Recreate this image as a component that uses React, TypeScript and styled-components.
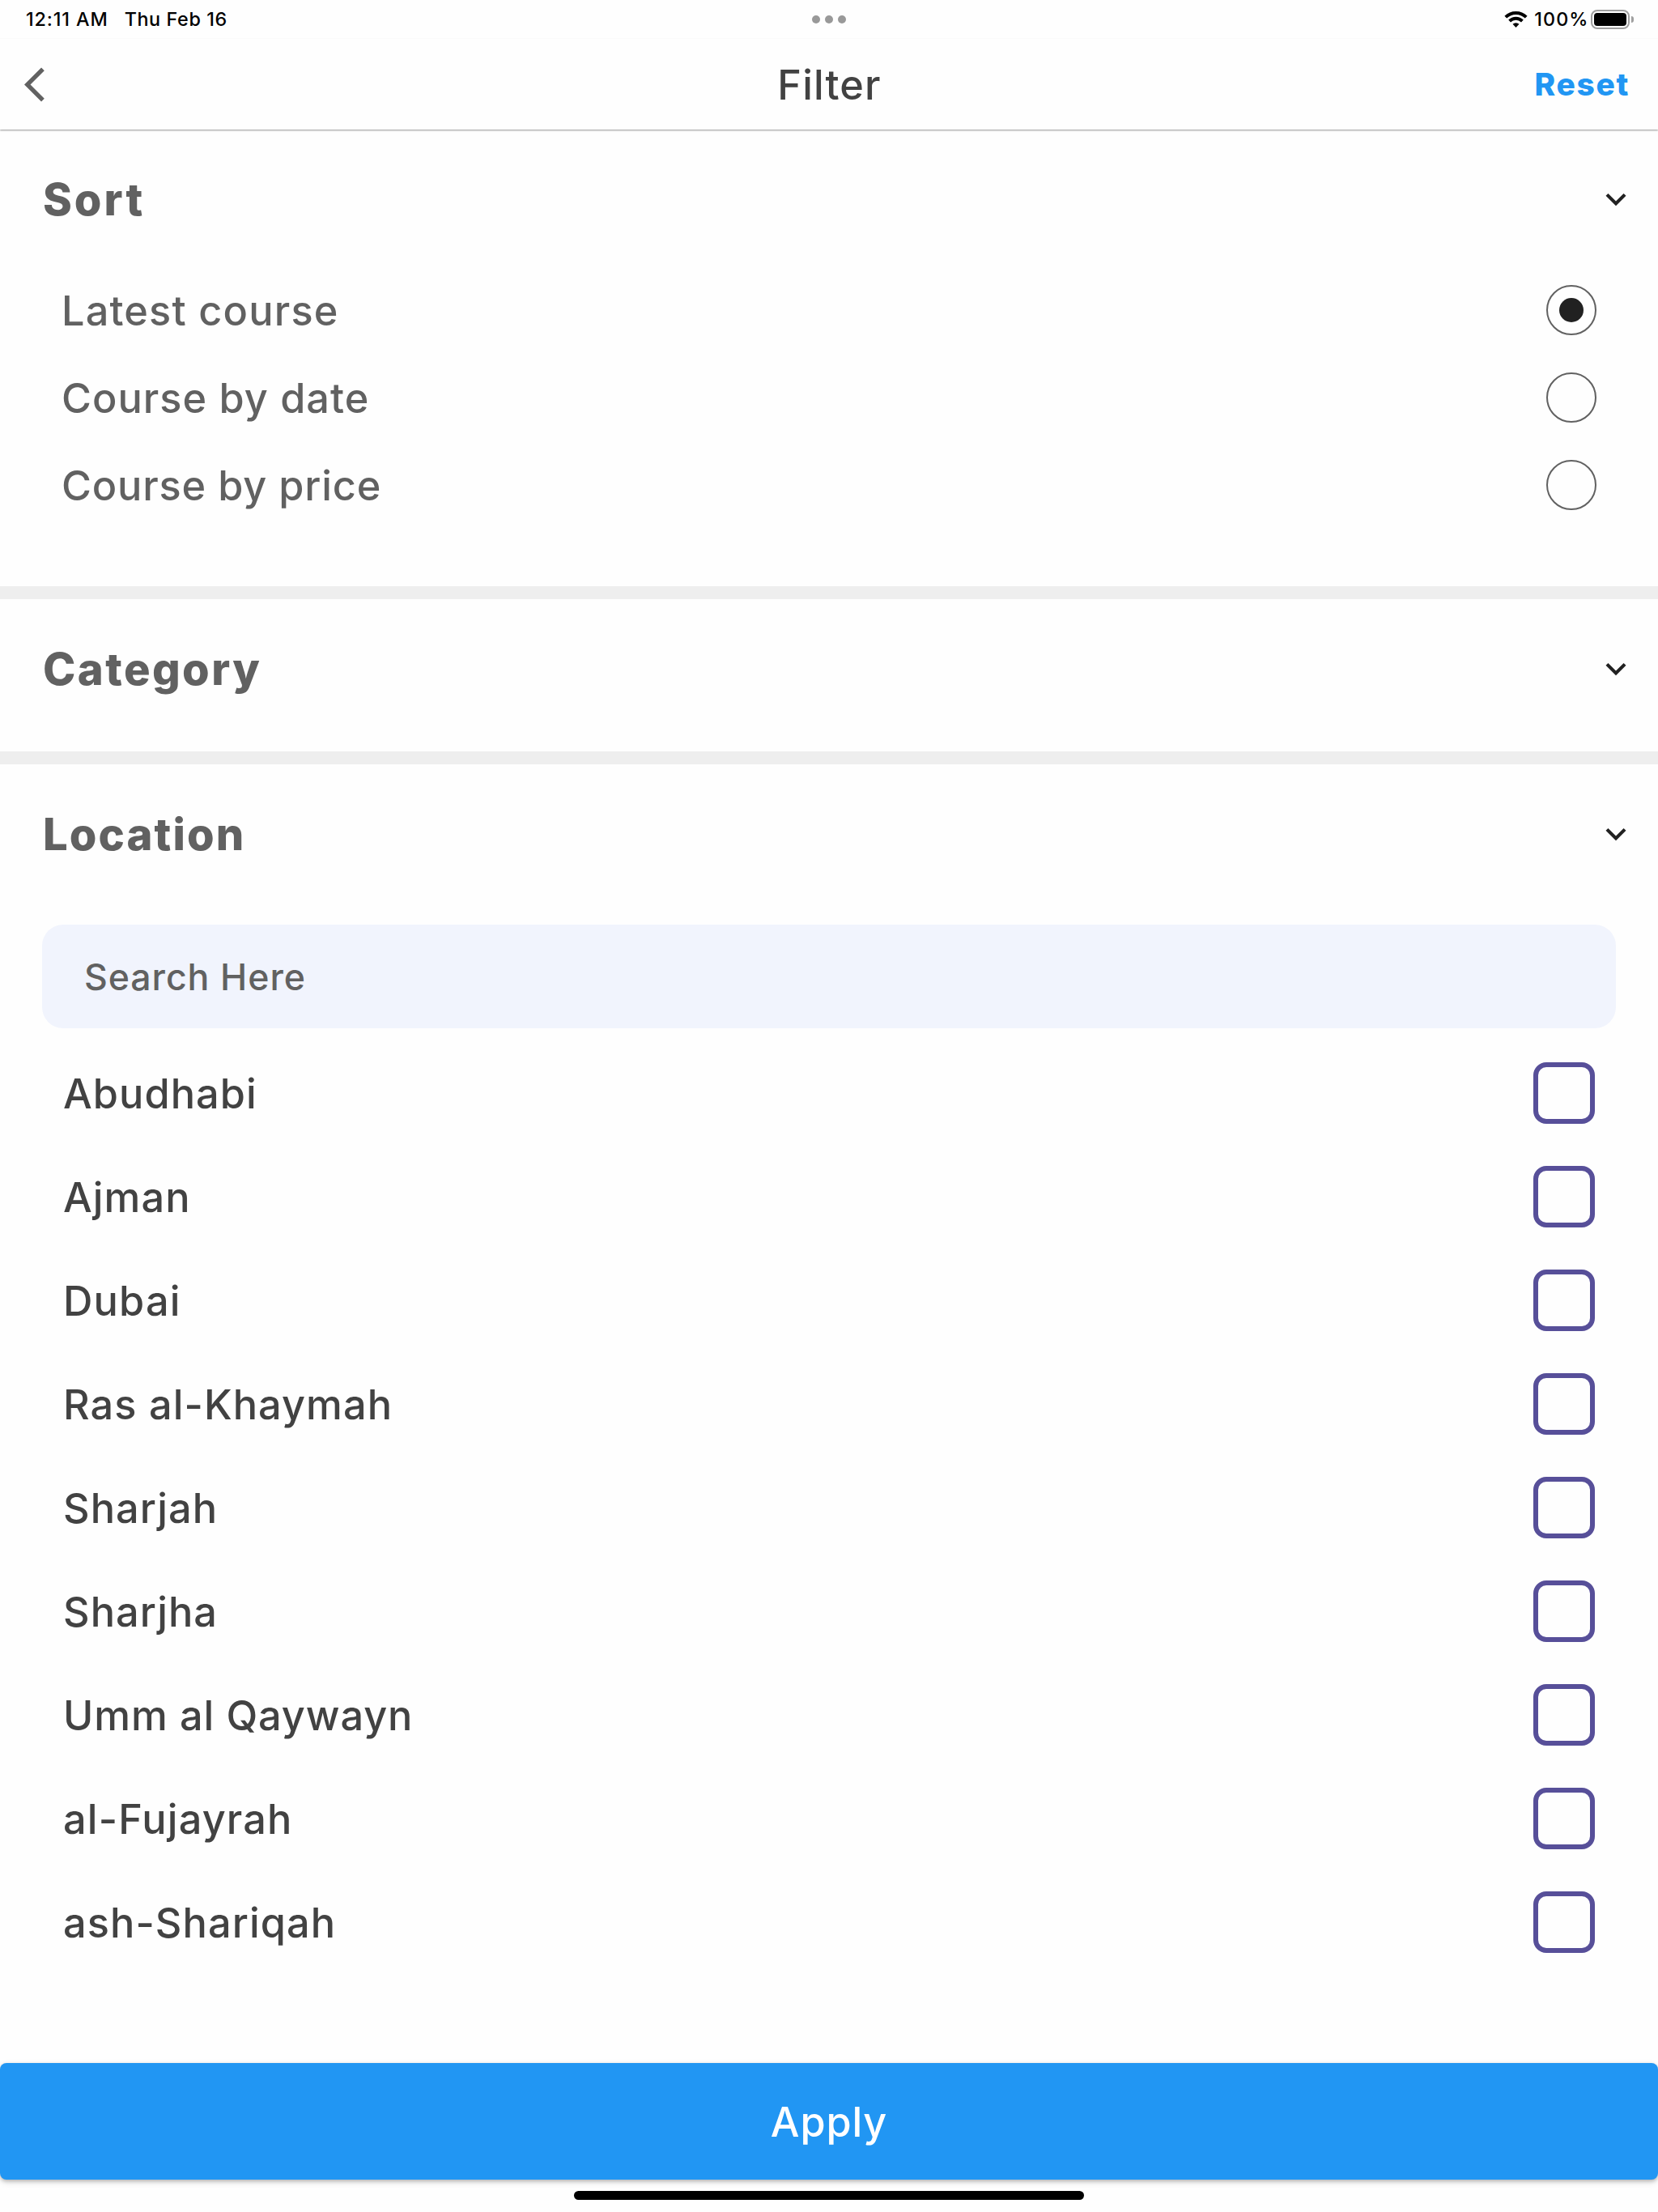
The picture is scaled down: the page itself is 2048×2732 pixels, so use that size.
import React, { useState } from 'react';
import styled, { createGlobalStyle } from 'styled-components';

const GlobalStyle = createGlobalStyle`
  *, *::before, *::after { box-sizing: border-box; }
  body { margin: 0; background: #fefefe; }
  button { border: 0; background: none; padding: 0; margin: 0; font: inherit; color: inherit; }
  svg { display: block; flex: none; }
`;

const Screen = styled.div`
  display: flex;
  flex-direction: column;
  width: 2048px;
  height: 2732px;
  overflow: hidden;
  background: #fefefe;
  font-family: Inter, 'Liberation Sans', sans-serif;
  font-weight: 500;
  font-kerning: normal;
`;

const StatusBar = styled.div`
  display: grid;
  grid-template-columns: 1fr auto 1fr;
  flex: none;
  height: 48px;
  padding: 0 30px 0 32px;
  border-bottom: 1px solid #fafafa;
  color: #000;
  font-size: 23.3px;
  line-height: 29px;
`;

const StatusGroup = styled.div<{ $end?: boolean }>`
  display: flex;
  justify-content: ${(p) => (p.$end ? 'flex-end' : 'flex-start')};
`;

const StatusText = styled.span<{ $spacing: number; $gap: number }>`
  padding-top: 9px;
  margin-right: ${(p) => p.$gap}px;
  letter-spacing: ${(p) => p.$spacing}px;
  white-space: nowrap;
`;

const Dots = styled.div`
  display: flex;
  gap: 6px;
  padding: 19px 2px 0 0;
`;

const Dot = styled.i`
  width: 10px;
  height: 10px;
  border-radius: 50%;
  background: #999;
`;

const WifiSvg = styled.svg`
  margin: 13px 8px 0 0;
`;

const Battery = styled.div`
  display: flex;
  align-items: center;
  gap: 2px;
  height: 24px;
  margin-top: 12px;
`;

const BatteryShell = styled.div`
  width: 48px;
  height: 24px;
  padding: 2px;
  border: 2px solid #9f9f9f;
  border-radius: 8px;
`;

const BatteryLevel = styled.div`
  height: 100%;
  border-radius: 4px;
  background: #000;
`;

const BatteryTip = styled.div`
  width: 3px;
  height: 8px;
  border-radius: 0 4px 4px 0;
  background: #9f9f9f;
`;

const AppBar = styled.header`
  display: grid;
  grid-template-columns: 1fr auto 1fr;
  align-items: center;
  flex: none;
  height: 112px;
  padding: 0 35px 0 30px;
  box-shadow: 0 1px 2px rgba(0, 0, 0, 0.42);
  clip-path: inset(0 0 -8px 0);
`;

const Label = styled.span<{ $spacing: number; $color: string }>`
  padding-top: 1px;
  color: ${(p) => p.$color};
  font-size: 50.4px;
  line-height: 61px;
  letter-spacing: ${(p) => p.$spacing}px;
  white-space: nowrap;
`;

const PageTitle = styled(Label)`
  padding-left: 6px;
`;

const ResetButton = styled.button`
  justify-self: end;
  padding-bottom: 1px;
  color: #2196f3;
  font-size: 38.8px;
  font-weight: 800;
  line-height: 47px;
  letter-spacing: 1.72px;
`;

const Section = styled.section<{ $bottom: number; $divided?: boolean }>`
  flex: none;
  padding: 53px 0 ${(p) => p.$bottom}px;
  border-bottom: ${(p) => (p.$divided ? 16 : 0)}px solid #eee;
`;

const SectionHeader = styled.div`
  display: flex;
  align-items: center;
  justify-content: space-between;
  height: 66px;
  padding: 0 27px 0 53px;
`;

const SectionTitle = styled.h2<{ $spacing: number }>`
  margin: 0;
  color: #616161;
  font-size: 54.3px;
  font-weight: 800;
  line-height: 66px;
  letter-spacing: ${(p) => p.$spacing}px;
`;

const SortList = styled.div`
  display: flex;
  flex-direction: column;
  margin-top: 50px;
`;

const SortRow = styled.div`
  display: flex;
  align-items: center;
  justify-content: space-between;
  height: 108px;
  padding: 0 76px;
`;

const Radio = styled.button`
  display: grid;
  place-items: center;
  width: 62px;
  height: 62px;
  border: 2px solid #616161;
  border-radius: 50%;
`;

const RadioMark = styled.i`
  width: 30px;
  height: 30px;
  border-radius: 50%;
  background: #212121;
`;

const SearchBox = styled.div`
  display: flex;
  align-items: center;
  height: 128px;
  margin: 79px 52px 16px;
  padding: 2px 52px 0;
  border-radius: 26px;
  background: #f1f4fd;
  color: #616161;
  font-size: 44.6px;
  line-height: 54px;
  letter-spacing: 0.93px;
`;

const PlaceRow = styled.div`
  display: flex;
  align-items: center;
  justify-content: space-between;
  height: 128px;
  padding: 0 78px;
`;

const Checkbox = styled.button`
  width: 76px;
  height: 76px;
  border: 6px solid #574f99;
  border-radius: 16px;
`;

const Footer = styled.footer`
  display: flex;
  flex-direction: column;
  align-items: center;
  margin-top: auto;
  padding-bottom: 15px;
`;

const ApplyButton = styled.button`
  display: flex;
  align-items: center;
  justify-content: center;
  width: 100%;
  height: 144px;
  border-radius: 8px;
  background: #2196f3;
  box-shadow: 0 2px 4px rgba(0, 0, 0, 0.2), 0 3px 8px rgba(0, 0, 0, 0.14);
`;

const HomeIndicator = styled.div`
  width: 630px;
  height: 11px;
  margin-top: 14px;
  border-radius: 6px;
  background: #000;
`;

function Chevron() {
  return (
    <svg width="50" height="50" viewBox="0 0 24 24" fill="#212121">
      <path d="M16.59 8.59 12 13.17 7.41 8.59 6 10l6 6 6-6z" />
    </svg>
  );
}

function BackArrow() {
  return (
    <svg width="51" height="51" viewBox="0 0 24 24" fill="#616161">
      <path d="M11.67 3.87 9.9 2.1 0 12l9.9 9.9 1.77-1.77L3.54 12z" />
    </svg>
  );
}

function Wifi() {
  return (
    <WifiSvg width="29" height="22" viewBox="0 0 29 22">
      <g fill="none" stroke="#000" strokeWidth="3.9">
        <path d="M1.8 8.2a18 18 0 0 1 25.4 0" />
        <path d="M6.6 13a11.2 11.2 0 0 1 15.8 0" />
      </g>
      <path d="M14.5 20.9l-4-4.1a5.7 5.7 0 0 1 8 0z" />
    </WifiSvg>
  );
}

const sortOptions = [
  { name: 'Latest course', spacing: 1.18 },
  { name: 'Course by date', spacing: 1.02 },
  { name: 'Course by price', spacing: 0.84 },
];

const places = [
  { name: 'Abudhabi', spacing: 1.08 },
  { name: 'Ajman', spacing: 1.1 },
  { name: 'Dubai', spacing: 1.2 },
  { name: 'Ras al-Khaymah', spacing: 1.1 },
  { name: 'Sharjah', spacing: 1.1 },
  { name: 'Sharjha', spacing: 1.1 },
  { name: 'Umm al Qaywayn', spacing: 0.92 },
  { name: 'al-Fujayrah', spacing: 1.18 },
  { name: 'ash-Shariqah', spacing: 1.12 },
];

export default function App() {
  const [sort, setSort] = useState(sortOptions[0].name);

  return (
    <>
      <GlobalStyle />
      <Screen>
        <StatusBar>
          <StatusGroup>
            <StatusText $spacing={0.9} $gap={20}>12:11 AM</StatusText>
            <StatusText $spacing={0.63} $gap={0}>Thu Feb 16</StatusText>
          </StatusGroup>
          <Dots>
            <Dot />
            <Dot />
            <Dot />
          </Dots>
          <StatusGroup $end>
            <Wifi />
            <StatusText $spacing={1.08} $gap={2.5}>100%</StatusText>
            <Battery>
              <BatteryShell>
                <BatteryLevel />
              </BatteryShell>
              <BatteryTip />
            </Battery>
          </StatusGroup>
        </StatusBar>

        <AppBar>
          <BackArrow />
          <PageTitle $spacing={1.12} $color="#424242">Filter</PageTitle>
          <ResetButton>Reset</ResetButton>
        </AppBar>

        <Section $bottom={71} $divided>
          <SectionHeader>
            <SectionTitle $spacing={3}>Sort</SectionTitle>
            <Chevron />
          </SectionHeader>
          <SortList>
            {sortOptions.map((o) => (
              <SortRow key={o.name}>
                <Label $spacing={o.spacing} $color="#616161">{o.name}</Label>
                <Radio aria-label={o.name} onClick={() => setSort(o.name)}>
                  {sort === o.name && <RadioMark />}
                </Radio>
              </SortRow>
            ))}
          </SortList>
        </Section>

        <Section $bottom={69} $divided>
          <SectionHeader>
            <SectionTitle $spacing={2.45}>Category</SectionTitle>
            <Chevron />
          </SectionHeader>
        </Section>

        <Section $bottom={0}>
          <SectionHeader>
            <SectionTitle $spacing={2.12}>Location</SectionTitle>
            <Chevron />
          </SectionHeader>
          <SearchBox>Search Here</SearchBox>
          {places.map((p) => (
            <PlaceRow key={p.name}>
              <Label $spacing={p.spacing} $color="#424242">{p.name}</Label>
              <Checkbox aria-label={p.name} />
            </PlaceRow>
          ))}
        </Section>

        <Footer>
          <ApplyButton>
            <Label $spacing={0.86} $color="#fff">Apply</Label>
          </ApplyButton>
          <HomeIndicator />
        </Footer>
      </Screen>
    </>
  );
}
